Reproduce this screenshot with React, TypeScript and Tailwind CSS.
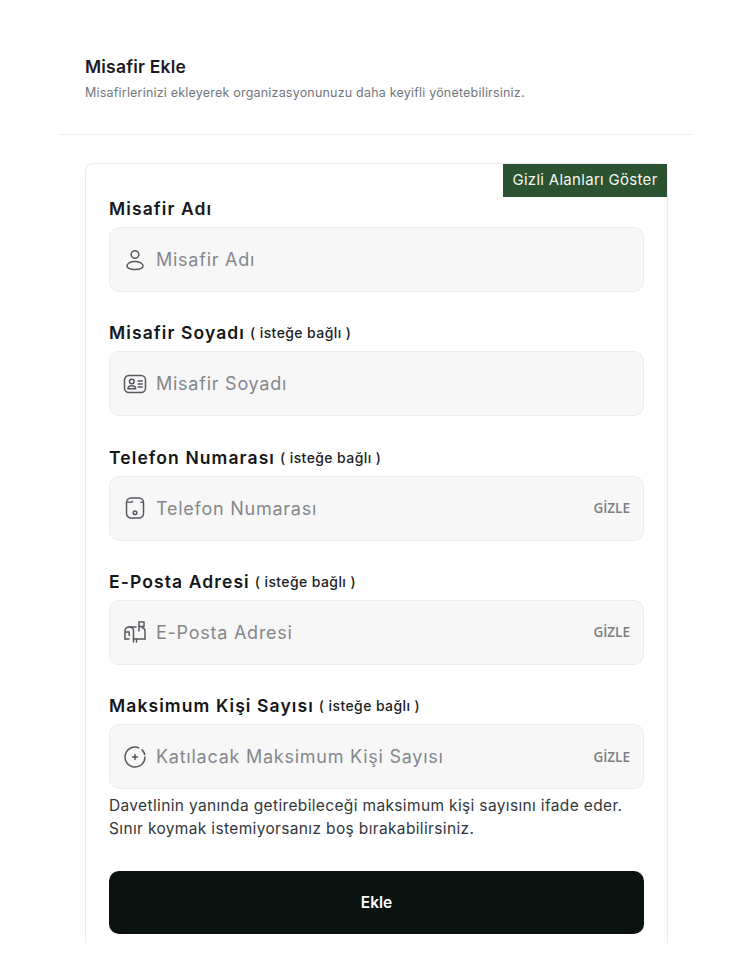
import type { ReactNode } from "react";

function UserIcon() {
  return (
    <svg viewBox="0 0 24 24" className="h-6 w-6" fill="none" stroke="#55595e" strokeWidth="1.5" aria-hidden="true">
      <circle cx="12" cy="6.500" r="3.800" />
      <path d="M12 13.500c-4.700 0-8 2-8 4.300s3.300 3.700 8 3.700 8-1.400 8-3.700-3.300-4.300-8-4.300z" />
    </svg>
  );
}

function CardIcon() {
  return (
    <svg viewBox="0 0 24 24" className="h-6 w-6" fill="none" stroke="#55595e" strokeWidth="1.5" strokeLinecap="round" aria-hidden="true">
      <rect x="1.500" y="3.500" width="21" height="17" rx="4.500" />
      <circle cx="8.800" cy="9.500" r="2.300" />
      <path d="M5 16.800c0-1.800 1.600-3 3.800-3s3.800 1.200 3.800 3z" />
      <path d="M15.200 9h4M15.200 12h4M15.200 15h4" />
    </svg>
  );
}

function PhoneIcon() {
  return (
    <svg viewBox="0 0 24 24" className="h-6 w-6" fill="none" stroke="#55595e" strokeWidth="1.5" strokeLinecap="round" aria-hidden="true">
      <rect x="3.500" y="2" width="17" height="20" rx="4.500" />
      <path d="M3.800 6.200h4.400c.7 0 1.100-.3 1.400-.9M20.200 6.200h-2.400" strokeOpacity="0.850" />
      <circle cx="12" cy="16.800" r="1.800" />
    </svg>
  );
}

function MailboxIcon() {
  return (
    <svg viewBox="0 0 24 24" className="h-6 w-6" fill="none" stroke="#55595e" strokeWidth="1.500" strokeLinecap="round" strokeLinejoin="round" aria-hidden="true">
      <path d="M2 19v-8c0-2.400 1.800-4 4.200-4H13" />
      <path d="M6.200 7c2.400 0 4.300 1.600 4.300 4v8" />
      <path d="M2.500 12h3.700v3.500" />
      <path d="M19 7.500c1.800.5 3 1.800 3 3.700V19" />
      <path d="M2 19h4M10.500 19H22" />
      <path d="M10.500 19v3M13.500 19v3" />
      <path d="M16 11V2h5v4.500h-5" />
    </svg>
  );
}

function PlusIcon() {
  return (
    <svg viewBox="0 0 24 24" className="h-6 w-6" fill="none" stroke="#55595e" strokeWidth="1.500" strokeLinecap="round" aria-hidden="true">
      <path d="M15.500 2.700A10 10 0 1 0 22 12" />
      <path d="M21.700 9.500a10 10 0 0 0-2.700-4.600" />
      <path d="M12 9.500v5M9.500 12h5" />
    </svg>
  );
}

type FieldProps = {
  label: string;
  optional?: boolean;
  placeholder: string;
  icon: ReactNode;
  hide?: boolean;
};

function Field({ label, optional, placeholder, icon, hide }: FieldProps) {
  return (
    <div>
      <label className="flex h-[22px] items-center gap-[5px] text-[17.500px] font-semibold leading-[22px] tracking-[1.100px] text-[#14161a]">
        {label}
        {optional && <span className="text-[14px] font-medium tracking-[0.400px] text-[#1c1e22]">( isteğe bağlı )</span>}
      </label>
      <div className="mt-[7px] flex h-[65px] items-center rounded-[10px] border border-[#ececee] bg-[#f7f7f8] pl-[13px] pr-[13px]">
        {icon}
        <span className="ml-[9px] flex-1 text-[18px] tracking-[0.750px] text-[#84878c]">{placeholder}</span>
        {hide && <span className="font-['Open_Sans',sans-serif] text-[13.500px] font-semibold text-[#7b7e83]">GİZLE</span>}
      </div>
    </div>
  );
}

export default function App() {
  return (
    <div className="h-[960px] w-[740px] overflow-hidden bg-white font-['Inter',sans-serif]">
      <div className="pl-[85px] pt-[57px]">
        <h1 className="text-[17.500px] font-semibold leading-[20px] tracking-[0.200px] text-[#1d1a26]">Misafir Ekle</h1>
        <p className="mt-[9px] text-[12.500px] leading-[14px] tracking-[0.200px] text-[#72767c]">
          Misafirlerinizi ekleyerek organizasyonunuzu daha keyifli yönetebilirsiniz.
        </p>
      </div>
      <div className="ml-[58px] mt-[34px] h-px w-[635px] bg-[#eeeeef]" />
      <div className="relative ml-[85px] mt-[28px] w-[583px] rounded-t-[8px] border border-b-0 border-[#ececee] px-[23px] pb-[9px] pt-[34px]">
        <div className="absolute right-0 top-0 flex h-[33px] w-[164px] items-center justify-center bg-[#2b5231] text-[15px] tracking-[0.300px] text-[#f4f6f1]">
          Gizli Alanları Göster
        </div>
        <div className="flex flex-col gap-[30.300px]">
          <Field label="Misafir Adı" placeholder="Misafir Adı" icon={<UserIcon />} />
          <Field label="Misafir Soyadı" optional placeholder="Misafir Soyadı" icon={<CardIcon />} />
          <Field label="Telefon Numarası" optional placeholder="Telefon Numarası" icon={<PhoneIcon />} hide />
          <Field label="E-Posta Adresi" optional placeholder="E-Posta Adresi" icon={<MailboxIcon />} hide />
          <Field label="Maksimum Kişi Sayısı" optional placeholder="Katılacak Maksimum Kişi Sayısı" icon={<PlusIcon />} hide />
        </div>
        <p className="mt-[5px] text-[15.500px] leading-[23px] tracking-[0.350px] text-[#33363b]">
          Davetlinin yanında getirebileceği maksimum kişi sayısını ifade eder.
          <br />
          Sınır koymak istemiyorsanız boş bırakabilirsiniz.
        </p>
        <button
          type="button"
          className="mt-[31px] h-[63px] w-full rounded-[10px] bg-[#0b1311] text-[15.500px] font-semibold text-white"
        >
          Ekle
        </button>
      </div>
    </div>
  );
}
